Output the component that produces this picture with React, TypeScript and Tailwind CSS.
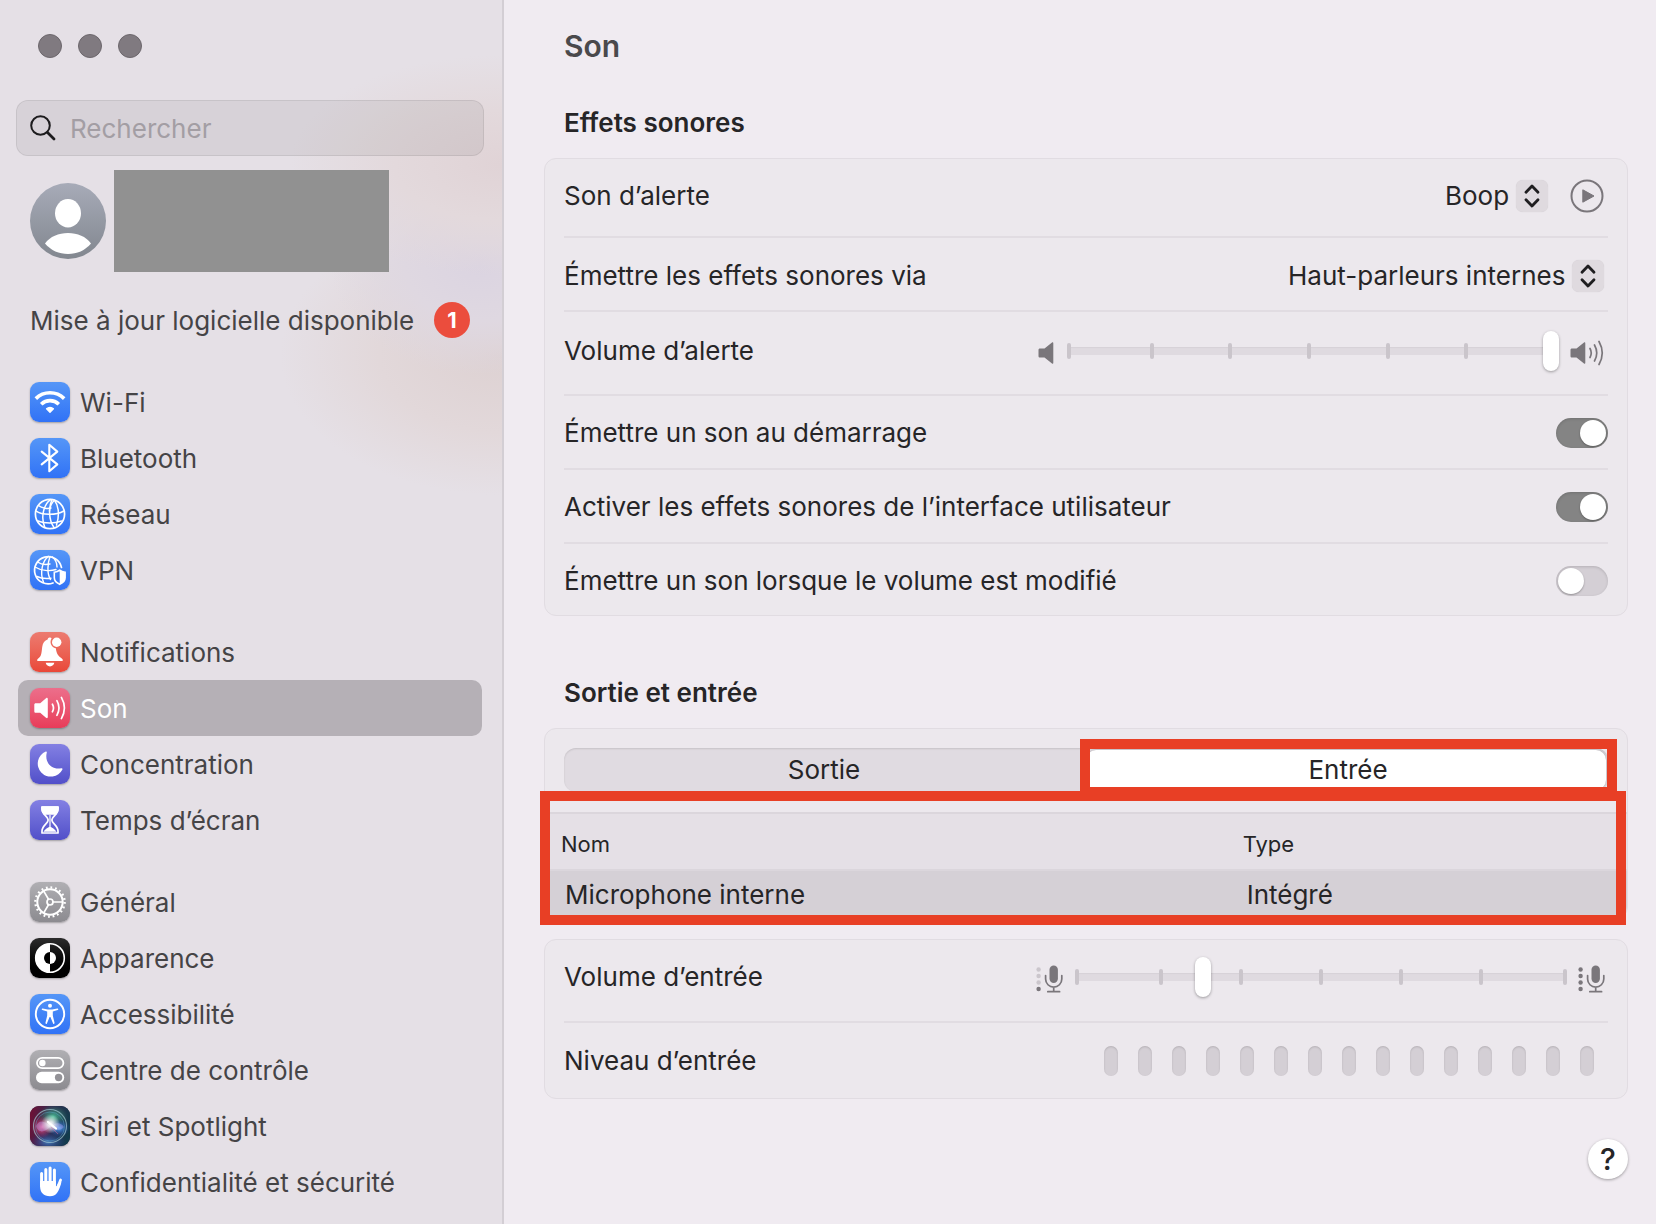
import React, { useState } from "react";

const WifiIcon = () => (
  <svg viewBox="0 0 40 40" fill="none" stroke="white" strokeWidth="3.6">
    <path d="M5.8 16.6a20.2 20.2 0 0 1 28.4 0" />
    <path d="M11.2 22.2a12.6 12.6 0 0 1 17.6 0" />
    <path d="M20 30.2l-3.4-3.4a5 5 0 0 1 6.8 0z" fill="white" strokeWidth="1.4" strokeLinejoin="round" />
  </svg>
);

const BluetoothIcon = () => (
  <svg viewBox="0 0 40 40" fill="none" stroke="white" strokeWidth="2.1" strokeLinecap="round" strokeLinejoin="round">
    <path d="M11.7 13.6l15.6 12.8-8 6.8V6.8l8 6.8-15.6 12.8" />
  </svg>
);

const GlobeIcon = () => (
  <svg viewBox="0 0 40 40" fill="none" stroke="white" strokeWidth="1.5" strokeLinecap="round">
    <circle cx="20" cy="20" r="14.6" strokeWidth="1.7" />
    <path d="M20.5 5.6C14 10 10.3 23 14.8 33.2" />
    <path d="M22 5.6C18.5 13 18.5 26 24 33.5" />
    <path d="M24.5 6.2C22.5 8 20 12 19.5 17" />
    <path d="M24.5 6.2C29 12 29.5 22 26.5 31" />
    <path d="M5.8 16.8C12 21.3 26 21.5 33.8 17" />
    <path d="M8 27C14 29.6 25 29.8 31.5 27" />
    <path d="M8.5 11.5C12 14.5 18 14.8 21 14" />
  </svg>
);

const VpnIcon = () => (
  <svg viewBox="0 0 40 40" fill="none" stroke="white" strokeWidth="1.4" strokeLinecap="round">
    <path d="M31.5 17.5A13.6 13.6 0 1 0 23 33" strokeWidth="1.7" />
    <path d="M18.5 6.4C12.5 10.5 9.5 22.5 13.5 32.2" />
    <path d="M20 6.4C17.5 13 16.8 24 20.5 29.5" />
    <path d="M22.5 7C26.5 10.5 27 14 27 17" />
    <path d="M5 17C11 20.8 20 21.5 26 19.5" />
    <path d="M7 26.5C11 28.5 16 28.8 21 28.2" />
    <path d="M7.5 12C11 14.5 16 14.8 20 14" />
    <path
      d="M29.7 20.2c1.8 1.4 3.5 1.8 5.4 2v5.6c0 3-2.4 5.2-5.4 6.5-3-1.3-5.4-3.5-5.4-6.5v-5.6c1.9-.2 3.6-.6 5.4-2z"
      strokeWidth="1.6"
    />
    <path d="M29.7 20.5c1.8 1.2 3.5 1.6 5.4 1.8v5.5c0 3-2.4 5.2-5.4 6.5z" fill="white" stroke="none" />
  </svg>
);

const BellIcon = () => (
  <svg viewBox="0 0 40 40" fill="white">
    <path d="M19.6 5.5c1 0 1.5.3 2 .8-2.3 3.8-.8 8.8 4.2 10 .8 6 2.7 7.800 6 10.2 1.2.9 1.500 2.500.3 2.500H7.900c-1.200 0-.9-1.600.3-2.500 3.600-2.600 3.300-6 4-11.500.5-4 2.600-6.400 5.400-7.400.3-1.400.9-2.100 2-2.100z" />
    <circle cx="26.7" cy="10.3" r="4.7" />
    <path d="M15.7 30.8h8.6c-.4 2.100-2 3.600-4.300 3.600s-3.900-1.500-4.300-3.600z" />
  </svg>
);

const SoundIcon = () => (
  <svg viewBox="0 0 40 40" fill="white" stroke="white" strokeLinecap="round">
    <path d="M5.8 15.3h4.400L16 10.200c1-.8 1.800-.5 1.800.7v18.200c0 1.200-.8 1.500-1.800.7l-5.800-5.100H5.800c-1 0-1.500-.5-1.500-1.500v-6.400c0-1 .5-1.500 1.500-1.500z" stroke="none" />
    <path d="M22.4 16.200q2.200 3.800 0 7.600M26.900 12.700q4.200 7.300 0 14.600M31.400 9.400q6 10.600 0 21.200" fill="none" strokeWidth="1.700" />
  </svg>
);

const MoonIcon = () => (
  <svg viewBox="0 0 40 40" fill="white">
    <path d="M15.800 7.600c.7-.3 1.200.2 1 .9-2.500 9.500 4.500 17.800 14.500 15.700.9-.2 1.500.4 1.100 1.200A13 13 0 1 1 15.800 7.600z" />
  </svg>
);

const HourglassIcon = () => (
  <svg viewBox="0 0 40 40" fill="none" stroke="white" strokeWidth="1.700" strokeLinejoin="round">
    <path d="M12 7h16v2c0 5-5.600 7.500-6 10.300v1.400c.4 2.800 6 5.300 6 10.300v2H12v-2c0-5 5.600-7.500 6-10.300v-1.400C17.600 16.500 12 14 12 9z" />
    <path d="M12 7h16v2c0 2-1 3.600-2.200 5H14.200C13 12.600 12 11 12 9z" fill="white" />
    <path d="M20 17v8c0 2.500-5 3.500-6.500 6.800h13C25 28.500 20 27.500 20 25z" fill="white" stroke="none" />
    <path d="M20 15v11" strokeWidth="1.200" />
  </svg>
);

const GearIcon = () => (
  <svg viewBox="0 0 40 40" fill="none" stroke="white">
    <circle cx="20" cy="20" r="14.6" strokeWidth="2.400" strokeDasharray="1.800 2.787" />
    <circle cx="20" cy="20" r="12.7" strokeWidth="2" />
    <circle cx="20" cy="20" r="3" strokeWidth="1.700" />
    <path d="M23 20h9.500M18.500 17.300l-4.900-8.400M18.500 22.700l-4.900 8.400" strokeWidth="1.700" />
  </svg>
);

const AppearanceIcon = () => (
  <svg viewBox="0 0 40 40">
    <circle cx="20" cy="20" r="14.3" fill="none" stroke="white" strokeWidth="1.600" />
    <path d="M20 5.500a14.500 14.500 0 0 0 0 29z" fill="white" />
    <path d="M20 14a6 6 0 0 0 0 12z" fill="black" />
    <path d="M20 14a6 6 0 0 1 0 12z" fill="white" />
  </svg>
);

const AccessibilityIcon = () => (
  <svg viewBox="0 0 40 40" fill="white">
    <circle cx="20" cy="20" r="14.2" fill="none" stroke="white" strokeWidth="1.900" />
    <circle cx="20" cy="11.8" r="2" />
    <path d="M12.600 14.600l5.200 1h4.400l5.200-1c1-.1 1.200 1.200.3 1.500l-4.900 1.300v4.200l1.800 7.300c.2 1-1.100 1.400-1.500.5L20.400 23h-.8l-2.700 6.400c-.4.900-1.700.5-1.500-.5l1.800-7.300v-4.200l-4.900-1.300c-.9-.3-.7-1.600.3-1.500z" />
  </svg>
);

const ControlCenterIcon = () => (
  <svg viewBox="0 0 40 40" fill="white">
    <rect x="7" y="7.8" width="26.4" height="10.4" rx="5.2" fill="none" stroke="white" strokeWidth="1.800" />
    <circle cx="12.4" cy="13" r="3.200" />
    <rect x="6" y="21.8" width="28.2" height="11.4" rx="5.700" />
    <circle cx="28.6" cy="27.5" r="3.700" fill="#939297" />
  </svg>
);

const SiriIcon = () => (
  <svg viewBox="0 0 40 40">
    <defs>
      <linearGradient id="siriBg" x1="0" y1="0.3" x2="1" y2="0.5">
        <stop offset="0" stopColor="#6d1136" />
        <stop offset="0.45" stopColor="#332a50" />
        <stop offset="1" stopColor="#123c4c" />
      </linearGradient>
      <radialGradient id="siriGreen">
        <stop offset="0" stopColor="#4fd0a0" stopOpacity="0.9" />
        <stop offset="1" stopColor="#2d8a70" stopOpacity="0" />
      </radialGradient>
      <radialGradient id="siriPink">
        <stop offset="0" stopColor="#f0609a" />
        <stop offset="1" stopColor="#c02860" stopOpacity="0" />
      </radialGradient>
      <radialGradient id="siriBlue">
        <stop offset="0" stopColor="#58b0ff" />
        <stop offset="1" stopColor="#2040b0" stopOpacity="0" />
      </radialGradient>
      <radialGradient id="siriGlow">
        <stop offset="0" stopColor="white" />
        <stop offset="0.3" stopColor="white" stopOpacity="0.8" />
        <stop offset="1" stopColor="white" stopOpacity="0" />
      </radialGradient>
    </defs>
    <rect width="40" height="40" rx="9" fill="url(#siriBg)" />
    <ellipse cx="18" cy="36" rx="18" ry="10" fill="url(#siriBlue)" opacity="0.6" />
    <ellipse cx="23" cy="11" rx="15" ry="12" fill="url(#siriGreen)" />
    <ellipse cx="12" cy="21" rx="11" ry="11" fill="url(#siriPink)" />
    <ellipse cx="29" cy="22" rx="11" ry="9" fill="url(#siriBlue)" />
    <circle cx="20" cy="20" r="16.5" fill="none" stroke="#a0c8d0" strokeOpacity="0.7" strokeWidth="1.100" />
    <circle cx="20" cy="20.500" r="14.5" fill="none" stroke="#64b4d8" strokeOpacity="0.45" strokeWidth="0.9" />
    <path d="M6 20c4-8 10-4 14 0s10 6 14 1c-4-6-10-4-14 0s-11 8-14-1z" fill="#b8a8f0" fillOpacity="0.400" />
    <circle cx="20.500" cy="18" r="9.500" fill="url(#siriGlow)" />
    <path d="M18 16l8 6.500" stroke="white" strokeWidth="2.200" strokeLinecap="round" />
    <path d="M21 21l7 7" stroke="#f070a0" strokeOpacity="0.600" strokeWidth="0.800" />
  </svg>
);

const HandIcon = () => (
  <svg viewBox="0 0 40 40" fill="none" stroke="white" strokeLinecap="round">
    <path d="M11.600 11.600V24M15.800 7.500V22M20.100 6V21M24.400 8V23" strokeWidth="3" />
    <path d="M30.600 18l-3 7.500" strokeWidth="2.700" />
    <path
      d="M10.100 19h15.800v4.800c0 .6.500.7.800.2l1.500-3 3.200-.8c-1 4-2.300 8-4.400 10.900-1.700 2.200-4 3.200-7 3.200-6.400 0-9.900-3.800-9.900-10z"
      fill="white"
      stroke="none"
    />
  </svg>
);

const groups = [
  [
    { title: "Wi-Fi", icon: WifiIcon, tile: "bg-linear-to-b from-[#5596f7] to-[#3172f6]" },
    { title: "Bluetooth", icon: BluetoothIcon, tile: "bg-linear-to-b from-[#5596f7] to-[#3172f6]" },
    { title: "Réseau", icon: GlobeIcon, tile: "bg-linear-to-b from-[#5596f7] to-[#3172f6]" },
    { title: "VPN", icon: VpnIcon, tile: "bg-linear-to-b from-[#5596f7] to-[#3172f6]" },
  ],
  [
    { title: "Notifications", icon: BellIcon, tile: "bg-linear-to-b from-[#ec7b70] to-[#e94738]" },
    { title: "Son", icon: SoundIcon, tile: "bg-linear-to-b from-[#ec6e8b] to-[#e83b59]" },
    { title: "Concentration", icon: MoonIcon, tile: "bg-linear-to-b from-[#8480e3] to-[#524fc9]" },
    { title: "Temps d’écran", icon: HourglassIcon, tile: "bg-linear-to-b from-[#8480e3] to-[#524fc9]" },
  ],
  [
    { title: "Général", icon: GearIcon, tile: "bg-linear-to-b from-[#b0afb3] to-[#8c8b90]" },
    { title: "Apparence", icon: AppearanceIcon, tile: "bg-linear-to-b from-[#2c2c2c] to-black" },
    { title: "Accessibilité", icon: AccessibilityIcon, tile: "bg-linear-to-b from-[#5596f7] to-[#3172f6]" },
    { title: "Centre de contrôle", icon: ControlCenterIcon, tile: "bg-linear-to-b from-[#b0afb3] to-[#8c8b90]" },
    { title: "Siri et Spotlight", icon: SiriIcon, tile: "bg-[#2c2447]" },
    { title: "Confidentialité et sécurité", icon: HandIcon, tile: "bg-linear-to-b from-[#5596f7] to-[#3172f6]" },
  ],
];

const Sidebar = () => {
  return (
    <aside className="w-[504px] shrink-0 border-r-2 border-[#d3ced4] bg-[#e5e0e6] bg-[radial-gradient(ellipse_210px_110px_at_500px_165px,#e0d3d6_0%,#e3d9dc_50%,transparent_100%),radial-gradient(ellipse_150px_110px_at_480px_265px,#dbd4e1_0%,#dfd8e1_50%,transparent_100%),radial-gradient(ellipse_220px_140px_at_500px_355px,#ddd1d2_0%,#e2d8da_55%,transparent_100%)] text-[#454446]">
      <div className="flex gap-4 pt-[34px] pl-[38px]">
        <button aria-label="Fermer" className="size-6 rounded-full border border-[#6c676c] bg-[#807a80]" />
        <button aria-label="Réduire" className="size-6 rounded-full border border-[#6c676c] bg-[#807a80]" />
        <button aria-label="Agrandir" className="size-6 rounded-full border border-[#6c676c] bg-[#807a80]" />
      </div>

      <label className="mt-[42px] mr-[18px] ml-4 flex h-14 items-center gap-[14px] rounded-xl border border-black/8 bg-black/6 px-[13px]">
        <svg viewBox="0 0 26 26" className="size-[26px] shrink-0" fill="none" stroke="#1d1c1e" strokeLinecap="round">
          <circle cx="10.5" cy="10.5" r="9.3" strokeWidth="2" />
          <path d="M17.500 17.500l6.500 6.500" strokeWidth="2.800" />
        </svg>
        <input
          type="search"
          aria-label="Rechercher"
          placeholder="Rechercher"
          className="min-w-0 flex-1 bg-transparent pt-[2px] text-[26px] outline-none placeholder:text-[#a39ea4]"
        />
      </label>

      <div className="mt-[14px] ml-[30px] flex items-center gap-2">
        <svg viewBox="0 0 76 76" className="size-[76px]">
          <defs>
            <linearGradient id="avatar" x1="0" y1="0" x2="0" y2="1">
              <stop offset="0" stopColor="#a7abb8" />
              <stop offset="1" stopColor="#82878f" />
            </linearGradient>
          </defs>
          <circle cx="38" cy="38" r="38" fill="url(#avatar)" />
          <ellipse cx="38" cy="30.3" rx="13" ry="14.2" fill="white" />
          <path d="M15 60.500C20 53.500 28.500 50 38 50s18 3.500 23 10.500C55 67.500 47 71 38 71s-17-3.500-23-10.500z" fill="white" />
        </svg>
        <div className="h-[102px] w-[275px] bg-[#919191]" />
      </div>

      <a href="#update" className="mt-[30px] mr-8 ml-[30px] flex h-9 items-center justify-between">
        <span className="pt-[2px]">Mise à jour logicielle disponible</span>
        <span className="flex size-9 items-center justify-center rounded-full bg-[#eb4d3d] text-[22px] font-bold text-white">
          1
        </span>
      </a>

      <nav className="mt-9 flex flex-col gap-[26px] pr-5 pb-3 pl-[18px]">
        {groups.map((items, idx) => {
          return (
            <ul key={idx}>
              {items.map((item) => {
                const Icon = item.icon;
                return (
                  <li key={item.title}>
                    <a
                      href="#"
                      className={
                        item.title === "Son"
                          ? "flex h-14 items-center gap-[10px] rounded-[10px] bg-[#b5b0b6] px-3 text-white"
                          : "flex h-14 items-center gap-[10px] rounded-[10px] px-3"
                      }
                    >
                      <span className={"size-10 rounded-[9px] shadow-[0_1px_2px_rgba(0,0,0,0.3)] " + item.tile}>
                        <Icon />
                      </span>
                      <span className="pt-[2px]">{item.title}</span>
                    </a>
                  </li>
                );
              })}
            </ul>
          );
        })}
      </nav>
    </aside>
  );
};

type PopupProps = { id: string; value: string };

const Popup = ({ id, value }: PopupProps) => (
  <span className="relative flex items-center">
    <select id={id} className="appearance-none bg-transparent pr-[38px] outline-none">
      <option>{value}</option>
    </select>
    <svg viewBox="0 0 32 32" className="pointer-events-none absolute right-0 size-8 rounded-[7px] bg-[#dfdadf] shadow-[0_0_1px_rgba(0,0,0,0.15)]">
      <path d="M10 12.300l6-6.300 6 6.300M10 19.700l6 6.300 6-6.300" fill="none" stroke="#1f1e20" strokeWidth="2.800" strokeLinecap="round" strokeLinejoin="round" />
    </svg>
  </span>
);

type SliderProps = { id: string; value: number; width: string };

const Slider = ({ id, value, width }: SliderProps) => {
  const [level, setLevel] = useState(value);
  return (
    <span className={"relative flex h-10 items-center px-2 " + width}>
      <span className="flex h-2 flex-1 items-center justify-between bg-[#dfdae0] shadow-[inset_0_1px_1px_rgba(0,0,0,0.04)]">
        {[0, 1, 2, 3, 4, 5, 6].map((tick) => (
          <span key={tick} className="h-4 w-1 rounded-[2px] bg-[#cac5cb] first:mr-1 last:ml-1" />
        ))}
      </span>
      <input
        id={id}
        type="range"
        min={0}
        max={100}
        value={level}
        onChange={(e) => setLevel(Number(e.target.value))}
        className="absolute inset-0 h-10 w-full appearance-none bg-transparent [&::-webkit-slider-thumb]:h-10 [&::-webkit-slider-thumb]:w-4 [&::-webkit-slider-thumb]:appearance-none [&::-webkit-slider-thumb]:rounded-full [&::-webkit-slider-thumb]:bg-white [&::-webkit-slider-thumb]:shadow-[0_1px_3px_rgba(0,0,0,0.35)]"
      />
    </span>
  );
};

type ToggleProps = { id: string; on?: boolean };

const Toggle = ({ id, on }: ToggleProps) => (
  <input
    id={id}
    type="checkbox"
    role="switch"
    defaultChecked={on}
    className="flex h-[30px] w-[52px] appearance-none items-center rounded-full bg-[#d4cfd5] px-[2px] shadow-[inset_0_1px_3px_rgba(0,0,0,0.15)] before:size-[26px] before:rounded-full before:bg-white before:shadow-[0_1px_2px_rgba(0,0,0,0.3)] checked:justify-end checked:bg-[#848484]"
  />
);

const Mic = ({ loud }: { loud?: boolean }) => (
  <svg viewBox="0 0 28 28" className="mt-1 size-7" fill="#7a767b">
    {[4.5, 11, 17.5].map((y) => (
      <circle key={y} cx="2.600" cy={y} r="2.200" fill={loud ? "#7a767b" : "#cbc6cc"} />
    ))}
    <circle cx="2.6" cy="24" r="2.200" />
    <rect x="13.5" y="0.5" width="8.4" height="17.5" rx="4.200" />
    <path d="M9.600 10.500v3.500a8.100 8.100 0 0 0 16.200 0v-3.500M17.700 22.200v4M11.800 26.700h11.800" fill="none" stroke="#7a767b" strokeWidth="1.700" strokeLinecap="round" />
  </svg>
);

type RowProps = { id: string; label: string; size: string; children: React.ReactNode };

const Row = ({ id, label, size, children }: RowProps) => (
  <div className={"flex items-center justify-between " + size}>
    <label htmlFor={id}>{label}</label>
    <div className="flex items-center">{children}</div>
  </div>
);

const App = () => {
  const [tab, setTab] = useState("input");

  return (
    <div className="flex min-h-screen bg-[#f0ebf1] font-[Inter,'Liberation_Sans',sans-serif] text-[26px] leading-[30px] text-[#262527]">
      <Sidebar />

      <main className="min-w-0 flex-1 pr-7 pb-11 pl-10">
        <h1 className="pt-7 pl-5 text-[30px] leading-9 font-semibold text-[#4a494c]">Son</h1>

        <h2 className="mt-11 pl-5 font-semibold">Effets sonores</h2>
        <section className="mt-5 divide-y-2 divide-[#e1dce2] rounded-xl border border-[#e1dce2] bg-[#ece8ed] px-[19px]">
          <Row id="alert" label="Son d’alerte" size="h-[79px] pb-1">
            <Popup id="alert" value="Boop" />
            <button aria-label="Écouter" className="mr-1 ml-[22px]">
              <svg viewBox="0 0 34 34" className="size-[34px]">
                <circle cx="17" cy="17" r="15.5" fill="none" stroke="#7a767b" strokeWidth="2" />
                <path d="M12.800 10.800v12.400L24 17z" fill="#7a767b" stroke="#7a767b" strokeLinejoin="round" />
              </svg>
            </button>
          </Row>
          <Row id="device" label="Émettre les effets sonores via" size="h-[74px] pt-1 pr-1">
            <Popup id="device" value="Haut-parleurs internes" />
          </Row>
          <Row id="alertVolume" label="Volume d’alerte" size="h-[84px] pb-1">
            <svg viewBox="0 0 16 22" className="mt-1 mr-[5px] h-[22px] w-4" fill="#7a767b">
              <path d="M2 6.500h4.500L14 .6c.8-.6 1.300-.3 1.300.6v19.600c0 .9-.5 1.200-1.300.6l-7.500-5.900H2c-1 0-1.500-.5-1.500-1.500V8c0-1 .5-1.500 1.500-1.500z" />
            </svg>
            <Slider id="alertVolume" value={100} width="w-[500px]" />
            <svg viewBox="0 0 34 26" className="mt-1 mr-1 ml-[11px] h-[26px] w-[34px]" fill="#7a767b">
              <path d="M2 8.500h4.500L14 2.600c.8-.6 1.300-.3 1.300.6v19.600c0 .9-.5 1.200-1.300.6l-7.500-5.900H2c-1 0-1.500-.5-1.500-1.500V10c0-1 .5-1.500 1.500-1.500z" />
              <path d="M20 8.500q2.500 4.500 0 9M24.500 5q4.500 8 0 16M29 1.500q6.500 11.500 0 23" fill="none" stroke="#7a767b" strokeWidth="1.700" strokeLinecap="round" />
            </svg>
          </Row>
          <Row id="startup" label="Émettre un son au démarrage" size="h-[74px] pt-[2px]">
            <Toggle id="startup" on />
          </Row>
          <Row id="interface" label="Activer les effets sonores de l’interface utilisateur" size="h-[74px] pt-[2px]">
            <Toggle id="interface" on />
          </Row>
          <Row id="feedback" label="Émettre un son lorsque le volume est modifié" size="h-[71px] pt-[2px]">
            <Toggle id="feedback" />
          </Row>
        </section>

        <h2 className="mt-[62px] pl-5 font-semibold">Sortie et entrée</h2>
        <section className="relative mt-5 rounded-xl border border-[#e1dce2] bg-[#ece8ed]">
          <div role="tablist" className="mx-[19px] mt-[19px] mb-5 grid h-11 grid-cols-2 rounded-xl bg-[#e0dbe1] shadow-[inset_0_1px_2px_rgba(0,0,0,0.12)]">
            <button
              role="tab"
              aria-selected={tab === "output"}
              onClick={() => setTab("output")}
              className="my-[2px] ml-[2px] rounded-[10px] pr-1 aria-selected:bg-white"
            >
              Sortie
            </button>
            <button
              role="tab"
              aria-selected={tab === "input"}
              onClick={() => setTab("input")}
              className="my-[2px] mr-[2px] rounded-[10px] pl-1 aria-selected:bg-white aria-selected:shadow-[0_0_2px_rgba(0,0,0,0.3)]"
            >
              Entrée
            </button>
          </div>
          <table className="w-full table-fixed text-left">
            <thead>
              <tr className="h-[57px] border-y-2 border-[#dbd6dc] bg-[#e5e0e6] text-[22px]">
                <th className="w-[63%] pt-1 pl-4 font-normal">Nom</th>
                <th className="pt-1 pl-4 font-normal">Type</th>
              </tr>
            </thead>
            <tbody>
              <tr className="h-12 bg-[#d5d0d6]">
                <td className="rounded-bl-xl pl-5">Microphone interne</td>
                <td className="rounded-br-xl pl-5">Intégré</td>
              </tr>
            </tbody>
          </table>
          <div className="pointer-events-none absolute top-[10px] right-[10px] left-[535px] h-[58px] border-10 border-[#e83f25]" />
          <div className="pointer-events-none absolute top-[62px] right-px -left-[5px] h-[134px] border-10 border-[#e83f25]" />
        </section>

        <section className="mt-5 divide-y-2 divide-[#e1dce2] rounded-xl border border-[#e1dce2] bg-[#ece8ed] px-[19px]">
          <Row id="inputVolume" label="Volume d’entrée" size="h-[83px] pb-2">
            <Mic />
            <Slider id="inputVolume" value={26} width="mx-[3px] w-[508px]" />
            <span className="mr-[2px]">
              <Mic loud />
            </span>
          </Row>
          <Row id="inputLevel" label="Niveau d’entrée" size="h-[75px]">
            <output id="inputLevel" className="mr-[14px] flex gap-5">
              {Array.from({ length: 15 }).map((_, idx) => (
                <span key={idx} className="h-[30px] w-[14px] rounded-full bg-[#d4cfd5] shadow-[inset_0_1px_2px_rgba(0,0,0,0.15)]" />
              ))}
            </output>
          </Row>
        </section>

        <div className="mt-10 flex justify-end">
          <button aria-label="Aide" className="flex size-10 items-center justify-center rounded-full bg-white text-[30px] font-medium shadow-[0_1px_3px_rgba(0,0,0,0.35)]">
            ?
          </button>
        </div>
      </main>
    </div>
  );
};

export default App;
